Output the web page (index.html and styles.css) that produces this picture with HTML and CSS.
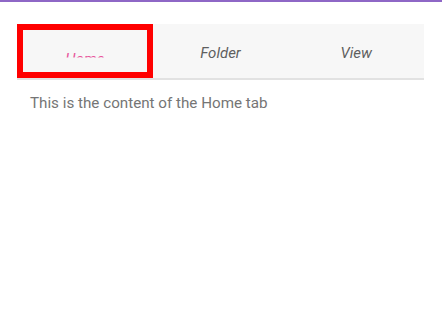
FILE: index.html
```html
<!DOCTYPE html>
<html lang="en">
<head>
    <meta charset="UTF-8">
    <meta name="viewport" content="width=device-width, initial-scale=1.0">
    <title>Tabs</title>
    <link rel="stylesheet" href="styles.css">
</head>
<body>
    <div class="top-bar"></div>

    <div class="page">
        <div class="tab-bar">
            <div class="tab active">
                <span class="tab-label"><span class="tab-text">Home</span></span>
            </div>
            <div class="tab">
                <span class="tab-label"><span class="tab-text">Folder</span></span>
            </div>
            <div class="tab">
                <span class="tab-label"><span class="tab-text">View</span></span>
            </div>
        </div>

        <div class="tab-content">
            <p>This is the content of the Home tab</p>
        </div>
    </div>
</body>
</html>
```

FILE: styles.css
```css
* {
    margin: 0;
    padding: 0;
    box-sizing: border-box;
    font-family: Roboto, 'Noto Sans', sans-serif;
}

body {
    background: #ffffff;
}

.top-bar {
    height: 2px;
    background: #8e67c6;
}

.page {
    padding: 22px 18px 0 17px;
}

.tab-bar {
    display: flex;
    background: #f7f7f7;
    border-bottom: 2px solid #e2e2e2;
}

.tab {
    flex: 1;
    height: 54px;
    display: flex;
    justify-content: center;
    align-items: center;
    padding-top: 3px;
}

.tab-label {
    display: block;
    font-size: 15px;
    line-height: 18px;
    font-style: italic;
    color: #5f5f5f;
}

.tab-text {
    display: block;
}

.tab.active {
    outline: 6px solid #ff0000;
    outline-offset: -6px;
}

.tab.active .tab-label {
    color: #e8559c;
    clip-path: inset(-4px -4px 4px -4px);
}

.tab.active .tab-text {
    transform: translateY(6px);
}

.tab-content {
    padding: 13px 13px;
}

.tab-content p {
    font-size: 15.2px;
    line-height: 20px;
    color: #757575;
}
```
